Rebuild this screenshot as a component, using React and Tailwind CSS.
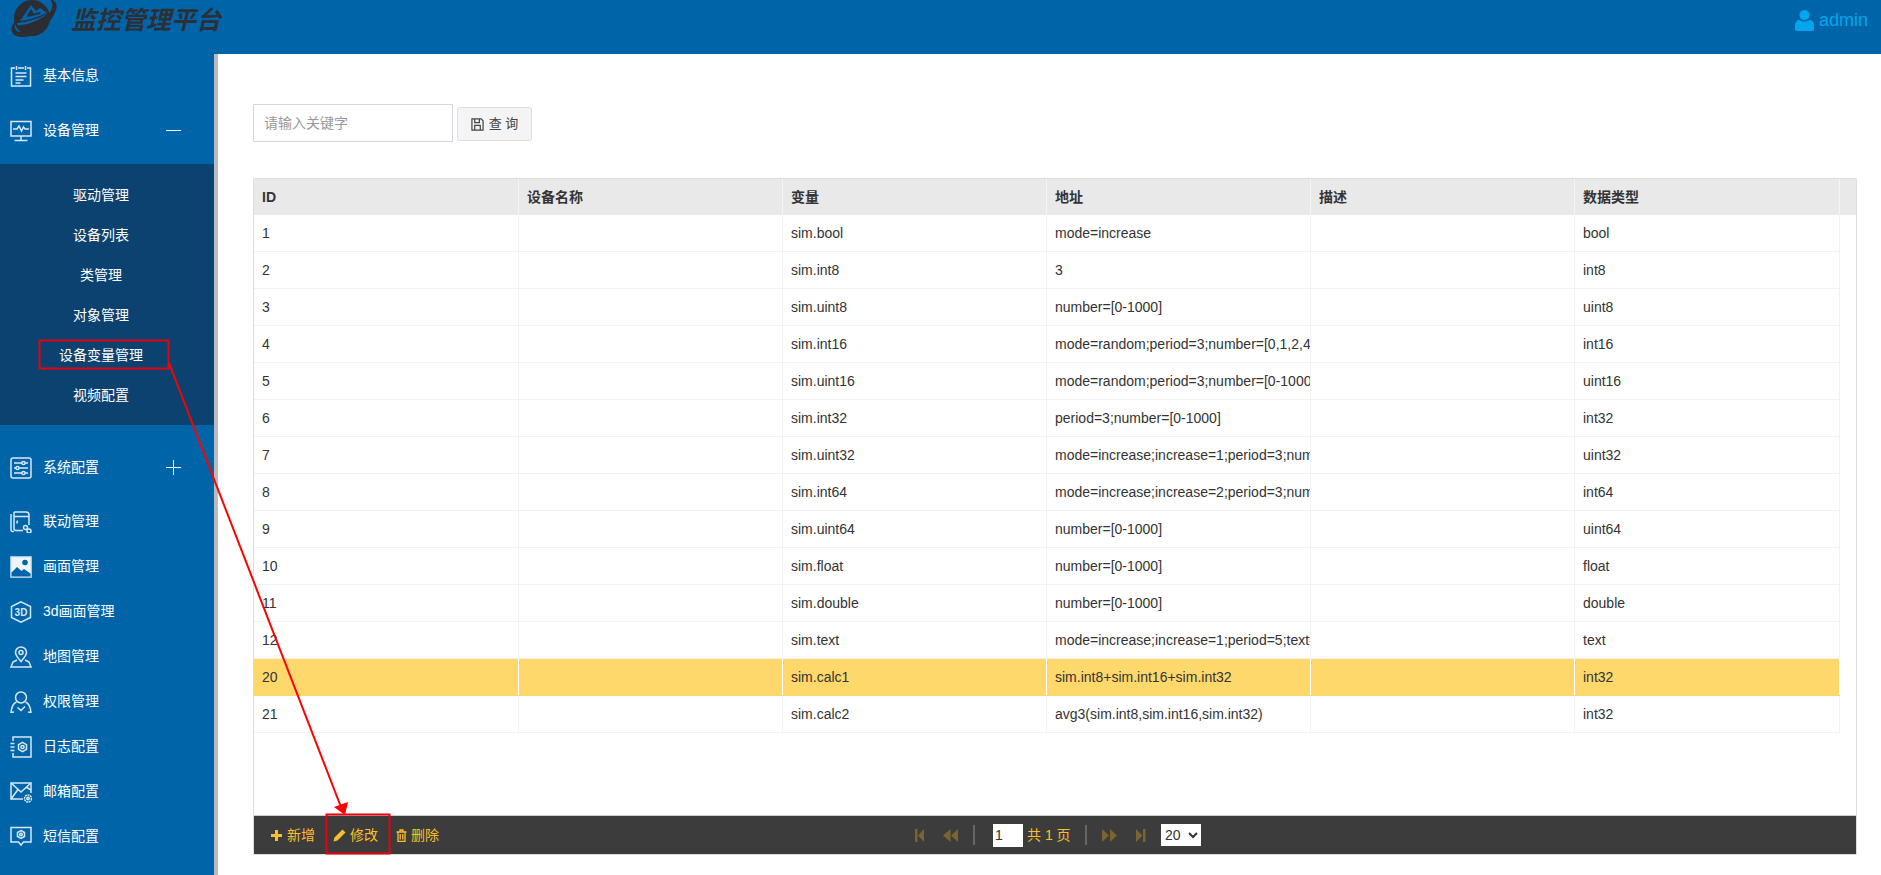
const FONT = '"Liberation Sans", "Noto Sans CJK SC", sans-serif';

const rows = [
  ['1', 'sim.bool', 'mode=increase', 'bool'],
  ['2', 'sim.int8', '3', 'int8'],
  ['3', 'sim.uint8', 'number=[0-1000]', 'uint8'],
  ['4', 'sim.int16', 'mode=random;period=3;number=[0,1,2,4,8,16,32]', 'int16'],
  ['5', 'sim.uint16', 'mode=random;period=3;number=[0-1000]', 'uint16'],
  ['6', 'sim.int32', 'period=3;number=[0-1000]', 'int32'],
  ['7', 'sim.uint32', 'mode=increase;increase=1;period=3;number=[0-1000]', 'uint32'],
  ['8', 'sim.int64', 'mode=increase;increase=2;period=3;number=[0-1000]', 'int64'],
  ['9', 'sim.uint64', 'number=[0-1000]', 'uint64'],
  ['10', 'sim.float', 'number=[0-1000]', 'float'],
  ['11', 'sim.double', 'number=[0-1000]', 'double'],
  ['12', 'sim.text', 'mode=increase;increase=1;period=5;text=hello', 'text'],
  ['20', 'sim.calc1', 'sim.int8+sim.int16+sim.int32', 'int32'],
  ['21', 'sim.calc2', 'avg3(sim.int8,sim.int16,sim.int32)', 'int32'],
];

const subItems = ['驱动管理', '设备列表', '类管理', '对象管理', '设备变量管理', '视频配置'];

// sidebar icons, all drawn on a 22x22 box
function NavIcon({ children }) {
  return (
    <svg width="22" height="22" viewBox="0 0 22 22" fill="none" stroke="#d6e8f5" strokeWidth="1.5" className="shrink-0">
      {children}
    </svg>
  );
}

const icons = {
  info: (
    <NavIcon>
      <path d="M5 3H1.500v18h19V3H17M8 3h6M6.500 1v4M15.500 1v4" />
      <path d="M5.500 8h11M5.500 11.500h11M5.500 15h8M5.500 18h5" />
    </NavIcon>
  ),
  device: (
    <NavIcon>
      <rect x="1" y="1.500" width="20" height="14.500" />
      <path d="M3 9h4l2-3 2.500 5 2-4 1.500 2h4M11 16v4M4.500 20.500h13" />
    </NavIcon>
  ),
  system: (
    <NavIcon>
      <rect x="1" y="1" width="20" height="20" rx="2" />
      <path d="M4 6h8M15 6h3M4 11h2M9 11h9M4 16h8M15 16h3" />
      <circle cx="13.500" cy="6" r="1.600" />
      <circle cx="7.500" cy="11" r="1.600" />
      <circle cx="13.500" cy="16" r="1.600" />
    </NavIcon>
  ),
  link: (
    <NavIcon>
      <path d="M4 20.500H2.500a1.500 1.500 0 0 1-1.500-1.500V3" />
      <path d="M4 1h12a3 3 0 0 1 3 3v10M4 1v16.500a2 2 0 0 0 2 2h7" />
      <path d="M4 5.500h15M7.500 9.500l-.7 3" />
      <circle cx="15.500" cy="16.500" r="2" />
      <circle cx="19" cy="20" r="2" />
    </NavIcon>
  ),
  picture: (
    <NavIcon>
      <rect x="1" y="1" width="20" height="20" fill="#eef5fa" stroke="#d6e8f5" />
      <circle cx="15" cy="6.500" r="2.800" fill="#0065a8" stroke="none" />
      <path d="M1.500 16.500 7 11l4.500 4 2.500-2 6.500 4.500v3h-19z" fill="#0065a8" stroke="none" />
    </NavIcon>
  ),
  three: (
    <NavIcon>
      <path d="M11 .8 20.500 5.500v11L11 21.200 1.500 16.500v-11z" />
      <text x="11" y="14.500" textAnchor="middle" fontSize="10" fontWeight="700" fill="#d6e8f5" stroke="none" fontFamily="Liberation Sans">3D</text>
    </NavIcon>
  ),
  map: (
    <NavIcon>
      <path d="M11 15.500C8 12 5.500 9.500 5.500 6.500a5.500 5.500 0 0 1 11 0c0 3-2.500 5.500-5.500 9z" />
      <circle cx="11" cy="6.500" r="2" />
      <path d="M7 14 3 16l-2 5h20l-2-5-4-2" />
    </NavIcon>
  ),
  auth: (
    <NavIcon>
      <circle cx="11" cy="6.500" r="5.500" />
      <path d="M6.500 11C3 12.500 1.500 15.500 1 21.500l3-.5M15.500 11c3.500 1.500 5 4.500 5.500 10.500l-3-.5M7.500 16.500l3.500 3 4-4" />
    </NavIcon>
  ),
  log: (
    <NavIcon>
      <path d="M3 5V1h18v20H3v-4" />
      <path d="M.5 7.500h4M.5 11h4M.5 14.500h4" />
      <circle cx="12.500" cy="11" r="1.600" />
      <path d="M12.500 6.300 16.500 8.600v4.800l-4 2.300-4-2.300V8.600z" />
    </NavIcon>
  ),
  mail: (
    <NavIcon>
      <path d="M13 18H1V2h20v10" />
      <path d="M1 2l10 9 10-9M1 18l7-9.500M21 9l-5-3" />
      <circle cx="18" cy="17.500" r="3.500" strokeDasharray="2 .6" />
      <circle cx="18" cy="17.500" r="1.200" />
    </NavIcon>
  ),
  sms: (
    <NavIcon>
      <path d="M1 1.500h20V16h-7.500L11 19l-2.500-3H1z" />
      <circle cx="11" cy="8.500" r="1.300" />
      <path d="M11 4.500 14.500 6.500v4L11 12.500l-3.500-2v-4z" />
    </NavIcon>
  ),
};

function NavRow({ icon, label, mark, className = '' }) {
  return (
    <div className={`flex h-[45px] items-center pl-[10px] text-[14px] text-white ${className}`}>
      {icons[icon]}
      <span className="ml-[11px]">{label}</span>
      {mark === 'minus' && <span className="absolute left-[166px] h-[1px] w-[15px] bg-white" />}
      {mark === 'plus' && (
        <span className="absolute left-[166px] h-[15px] w-[15px]">
          <span className="absolute left-0 top-[7px] h-[1px] w-[15px] bg-white" />
          <span className="absolute left-[7px] top-0 h-[15px] w-[1px] bg-white" />
        </span>
      )}
    </div>
  );
}

function Logo() {
  return (
    <svg width="50" height="54" viewBox="8 0 50 54" className="shrink-0">
      <circle cx="32" cy="18" r="18" fill="#2b2d33" />
      <path d="M15 21C8 30 12 38 24 37 38 36 52 22 56 10 58 4 55 0 50-1 53 3 53 7 50 12 44 22 30 32 20 32 15 32 14 27 15 21z" fill="#2b2d33" />
      <path d="M20 21 31 5 36 11 40 8 47 13C38 17 28 20 20 21z" fill="#0065a8" />
      <path d="M28 14 31 9 34 14 39 12 41 13.500C36 15 32 16 27 17z" fill="#2b2d33" />
      <path d="M17 23C26 22 38 19 47 14 40 20 28 25 18 25.500z" fill="#0065a8" />
    </svg>
  );
}

function TriIcon({ d }) {
  return (
    <svg width="15" height="15" viewBox="0 0 15 15" fill="#7a6432" className="shrink-0">
      <path d={d} />
    </svg>
  );
}

export default function App() {
  return (
    <div className="relative flex h-[875px] w-full flex-col overflow-hidden bg-white" style={{ fontFamily: FONT }}>
      {/* header */}
      <header className="flex h-[54px] shrink-0 items-start overflow-hidden bg-[#0065a8]">
        <div className="ml-[8px]"><Logo /></div>
        <div className="ml-[13px] mt-[3px] text-[25px] font-bold italic leading-[34px] text-[#2b2f36]">监控管理平台</div>
        <div className="ml-auto mr-[13px] mt-[9px] flex items-center gap-[5px] text-[18px] leading-[22px] text-[#00a7ee]">
          <svg width="19" height="21" viewBox="0 0 19 21" fill="#00a7ee">
            <circle cx="9.500" cy="5" r="5" />
            <path d="M0 19v-4c0-3 2-5 4.500-5 1 1 3 1.500 5 1.500s4-.5 5-1.500c2.500 0 4.500 2 4.500 5v4c0 1-1 2-2 2H2c-1 0-2-1-2-2z" />
          </svg>
          <span>admin</span>
        </div>
      </header>

      <div className="flex min-h-0 flex-1">
        {/* sidebar */}
        <aside className="w-[214px] shrink-0 bg-[#0065a8]">
          <NavRow icon="info" label="基本信息" className="mt-[-1px]" />
          <NavRow icon="device" label="设备管理" mark="minus" className="mt-[10px]" />
          <div className="mt-[11px] bg-[#0c426f] pb-[10px] pt-[11px] pr-[12px] text-center text-[14px] text-white">
            {subItems.map((s) => (
              <div key={s} className="flex h-[40px] items-center justify-center">{s}</div>
            ))}
          </div>
          <NavRow icon="system" label="系统配置" mark="plus" className="mt-[20px]" />
          <NavRow icon="link" label="联动管理" className="mt-[9px]" />
          <NavRow icon="picture" label="画面管理" />
          <NavRow icon="three" label="3d画面管理" />
          <NavRow icon="map" label="地图管理" />
          <NavRow icon="auth" label="权限管理" />
          <NavRow icon="log" label="日志配置" />
          <NavRow icon="mail" label="邮箱配置" />
          <NavRow icon="sms" label="短信配置" />
        </aside>
        <div className="w-[4px] shrink-0 bg-[#b9bcc2]" />

        {/* main */}
        <main className="flex-1 pl-[35px] pt-[50px]">
          <div className="flex items-center gap-[4px]">
            <input
              placeholder="请输入关键字"
              className="h-[38px] w-[200px] border border-[#d2d6de] px-[10px] text-[14px] text-[#555] outline-none placeholder:text-[#999]"
            />
            <button className="mt-[2px] flex h-[34px] w-[75px] items-center justify-center gap-[5px] rounded-[3px] border border-[#ddd] bg-[#f4f4f4] text-[13px] text-[#444]">
              <svg width="13" height="13" viewBox="0 0 14 14" fill="none" stroke="#444" strokeWidth="1.300" className="shrink-0">
                <path d="M1 1h10l2 2v10H1zM4 1v4h5V1M4 13V8h6v5" />
              </svg>
              <span>查 询</span>
            </button>
          </div>

          {/* table panel */}
          <div className="mt-[36px] flex h-[677px] w-[1604px] flex-col rounded-t-[2px] border border-[#ddd] text-[14px] text-[#333]">
            <div className="grid h-[36px] shrink-0 grid-cols-[265px_264px_264px_264px_264px_265px_1fr] items-stretch bg-[#e9e9e9] font-bold">
              {['ID', '设备名称', '变量', '地址', '描述', '数据类型', ''].map((h, i) => (
                <div key={i} className="flex items-center border-r border-[#f5f5f5] pl-[8px] last:border-r-0">{h}</div>
              ))}
            </div>
            <div className="flex-1">
              {rows.map((r) => {
                const on = r[0] === '20';
                return (
                  <div
                    key={r[0]}
                    className={`grid h-[37px] w-[1586px] grid-cols-[265px_264px_264px_264px_264px_265px] border-b ${on ? 'border-[#ffd86b] bg-[#ffd86b]' : 'border-[#f2f2f2]'}`}
                  >
                    {[r[0], '', r[1], r[2], '', r[3]].map((c, i) => (
                      <div
                        key={i}
                        className={`flex items-center overflow-hidden whitespace-nowrap border-r pl-[8px] ${on ? 'border-white' : 'border-[#f2f2f2]'}`}
                      >
                        {c}
                      </div>
                    ))}
                  </div>
                );
              })}
            </div>

            {/* toolbar */}
            <div className="flex h-[39px] shrink-0 items-center border-t border-[#ccc] bg-[#3c3c3c] text-[14px] text-[#fbbf2d]">
              <div className="ml-[17px] flex w-[46px] items-center gap-[5px] whitespace-nowrap">
                <svg width="11" height="11" viewBox="0 0 11 11" fill="#fbbf2d" className="shrink-0"><path d="M4 0h3v4h4v3H7v4H4V7H0V4h4z" /></svg>
                <span>新增</span>
              </div>
              <div className="ml-[16px] flex w-[50px] items-center gap-[4px] whitespace-nowrap">
                <svg width="13" height="13" viewBox="0 0 13 13" fill="#fbbf2d" className="shrink-0"><path d="M9.500 .5 12.500 3.500 4.500 11.500 .5 12.500 1.500 8.500z" /></svg>
                <span>修改</span>
              </div>
              <div className="ml-[13px] flex w-[48px] items-center gap-[4px] whitespace-nowrap">
                <svg width="11" height="13" viewBox="0 0 11 13" fill="none" stroke="#fbbf2d" strokeWidth="1.300" className="shrink-0"><path d="M.5 3h10M4 3V1h3v2M2 3v9.500h7V3M4.200 5v5.500M6.800 5v5.500" /></svg>
                <span>删除</span>
              </div>

              {/* pager */}
              <div className="ml-[468px] flex items-center">
                <TriIcon d="M3 1h2.500v13H3zM12 1v13L6 7.500z" />
                <div className="ml-[16px]"><TriIcon d="M7.500 1v13L0 7.500zM15 1v13L8 7.500z" /></div>
                <div className="ml-[15px] h-[20px] w-[2px] bg-[#666]" />
                <input defaultValue="1" className="ml-[18px] h-[23px] w-[30px] bg-white pl-[2px] text-[14px] text-[#333] outline-none" />
                <span className="ml-[4px] w-[44px] whitespace-nowrap">共 1 页</span>
                <div className="ml-[14px] h-[20px] w-[2px] bg-[#666]" />
                <div className="ml-[15px]"><TriIcon d="M0 1 7 7.500 0 14zM8 1l7 6.500L8 14z" /></div>
                <div className="ml-[18px]"><TriIcon d="M1 1 7.500 7.500 1 14zM8 1h2.500v13H8z" /></div>
                <select defaultValue="20" className="ml-[11px] h-[22px] w-[40px] bg-white text-[14px] text-[#333] outline-none">
                  <option value="20">20</option>
                  <option value="50">50</option>
                </select>
              </div>
            </div>
          </div>
        </main>
      </div>

      {/* red annotations over the page */}
      <svg className="pointer-events-none absolute left-0 top-0" width="420" height="875" fill="none">
        <rect x="39.500" y="340.500" width="129" height="28" stroke="#e8000e" strokeWidth="2" />
        <rect x="326.500" y="814.500" width="63" height="39" stroke="#e8000e" strokeWidth="2" />
        <path d="M169 363 341 807" stroke="#f00" strokeWidth="2" />
        <path d="M345 815 334 807 348 802z" fill="#f00" />
      </svg>
    </div>
  );
}
